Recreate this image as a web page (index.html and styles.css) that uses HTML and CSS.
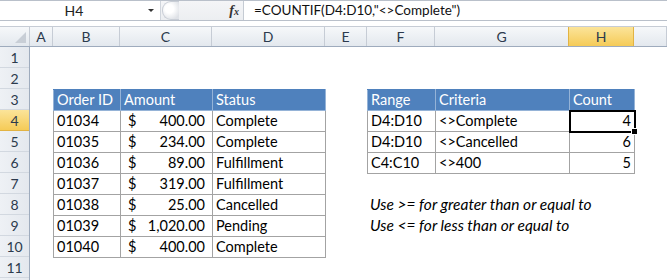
FILE: index.html
```html
<!DOCTYPE html>
<html lang="en">
<head>
    <meta charset="UTF-8">
    <title>COUNTIF not equal to</title>
    <link rel="stylesheet" href="styles.css">
</head>
<body>

    <div class="formula-bar">
        <div class="name-box">
            <span class="cell-ref">H4</span>
            <span class="drop"></span>
        </div>
        <div class="tools">
            <span class="grip"></span>
            <span class="fx">f<small>x</small></span>
        </div>
        <div class="formula">=COUNTIF(D4:D10,"&lt;&gt;Complete")</div>
    </div>

    <div class="sheet">
        <div class="col-heads">
            <div class="corner"><span class="tri"></span></div>
            <div class="ch">A</div>
            <div class="ch">B</div>
            <div class="ch">C</div>
            <div class="ch">D</div>
            <div class="ch">E</div>
            <div class="ch">F</div>
            <div class="ch">G</div>
            <div class="ch active">H</div>
            <div class="ch"></div>
        </div>

        <div class="body">
            <div class="row-heads">
                <div class="rh">1</div>
                <div class="rh">2</div>
                <div class="rh">3</div>
                <div class="rh active">4</div>
                <div class="rh">5</div>
                <div class="rh">6</div>
                <div class="rh">7</div>
                <div class="rh">8</div>
                <div class="rh">9</div>
                <div class="rh">10</div>
                <div class="rh">11</div>
                <div class="rh"></div>
            </div>

            <div class="cells">
                <table class="tbl orders">
                    <colgroup>
                        <col class="w-b"><col class="w-c"><col class="w-d">
                    </colgroup>
                    <tr class="head"><td>Order ID</td><td>Amount</td><td>Status</td></tr>
                    <tr><td>01034</td><td class="money"><span class="cur">$</span>400.00</td><td>Complete</td></tr>
                    <tr><td>01035</td><td class="money"><span class="cur">$</span>234.00</td><td>Complete</td></tr>
                    <tr><td>01036</td><td class="money"><span class="cur">$</span>89.00</td><td>Fulfillment</td></tr>
                    <tr><td>01037</td><td class="money"><span class="cur">$</span>319.00</td><td>Fulfillment</td></tr>
                    <tr><td>01038</td><td class="money"><span class="cur">$</span>25.00</td><td>Cancelled</td></tr>
                    <tr><td>01039</td><td class="money"><span class="cur">$</span>1,020.00</td><td>Pending</td></tr>
                    <tr><td>01040</td><td class="money"><span class="cur">$</span>400.00</td><td>Complete</td></tr>
                </table>

                <table class="tbl counts">
                    <colgroup>
                        <col class="w-f"><col class="w-g"><col class="w-h">
                    </colgroup>
                    <tr class="head"><td>Range</td><td>Criteria</td><td>Count</td></tr>
                    <tr><td>D4:D10</td><td>&lt;&gt;Complete</td><td class="num selected">4</td></tr>
                    <tr><td>D4:D10</td><td>&lt;&gt;Cancelled</td><td class="num">6</td></tr>
                    <tr><td>C4:C10</td><td>&lt;&gt;400</td><td class="num">5</td></tr>
                </table>

                <div class="notes">
                    <p>Use &gt;= for greater than or equal to</p>
                    <p>Use &lt;= for less than or equal to</p>
                </div>
            </div>
        </div>
    </div>

</body>
</html>
```

FILE: styles.css
```css
body {
    margin: 0;
    font-family: 'Lato', 'Liberation Sans', sans-serif;
    font-size: 14.5px;
    color: #000;
    background-color: #fff;
    width: 667px;
    height: 280px;
    overflow: hidden;
}

/* formula bar */

.formula-bar {
    display: flex;
    height: 21px;
    border-top: 1px solid #b9c0ca;
    border-bottom: 1px solid #b9c0ca;
    background-color: #fff;
    box-sizing: border-box;
}

.name-box {
    width: 160px;
    display: flex;
    align-items: center;
    border-right: 1px solid #d0d5dc;
}

.cell-ref {
    flex: 1;
    text-align: center;
    font-size: 14px;
    color: #222;
}

.drop {
    width: 0;
    height: 0;
    border-left: 3px solid transparent;
    border-right: 3px solid transparent;
    border-top: 3px solid #333;
    margin-right: 6px;
}

.tools {
    width: 82px;
    display: flex;
    align-items: center;
    justify-content: space-between;
    background: linear-gradient(#f4f5f7, #eceef1);
    border-right: 1px solid #c5cbd3;
}

.grip {
    width: 16px;
    height: 17px;
    margin-left: 1px;
    border: 1px solid #c9ced6;
    border-right: none;
    border-radius: 9px 0 0 9px;
    background: radial-gradient(circle at 40% 40%, #fff 30%, #dfe2e7 80%);
}

.fx {
    font-family: 'Liberation Serif', serif;
    font-style: italic;
    font-weight: bold;
    font-size: 14px;
    color: #333;
    margin-right: 4px;
}

.fx small {
    font-size: 10px;
}

.formula {
    flex: 1;
    padding-left: 10px;
    line-height: 19px;
    font-size: 13.5px;
    color: #111;
}

/* sheet */

.sheet {
    margin-top: 5px;
    border-top: 1px solid #c6ccd5;
}

.col-heads {
    display: grid;
    grid-template-columns: 30px 23px 67px 92px 113px 42px 68px 134px 65px 1fr;
    height: 19px;
    background: linear-gradient(#f6f8fa, #e3e8ee);
    border-bottom: 1px solid #9eabbd;
}

.corner {
    position: relative;
    border-right: 1px solid #c6ccd5;
}

.tri {
    position: absolute;
    right: 3px;
    bottom: 3px;
    width: 0;
    height: 0;
    border-left: 11px solid transparent;
    border-bottom: 11px solid #c8ced6;
}

.ch {
    text-align: center;
    line-height: 19px;
    font-size: 14px;
    color: #2c3a4d;
    border-right: 1px solid #c6ccd5;
}

.ch.active {
    background: linear-gradient(#fbe49a, #f5cb57);
    border-right: 1px solid #e2b343;
    border-left: 1px solid #e2b343;
    margin-left: -1px;
}

.body {
    display: flex;
}

.row-heads {
    width: 30px;
    flex-shrink: 0;
    background: linear-gradient(to right, #eef1f5, #e4e8ee);
    border-right: 1px solid #9eabbd;
    box-sizing: border-box;
}

.rh {
    height: 21px;
    line-height: 21px;
    text-align: center;
    font-size: 14px;
    color: #2c3a4d;
    border-bottom: 1px solid #d2d8e0;
    box-sizing: border-box;
}

.rh.active {
    background: linear-gradient(#fbe49a, #f5cb57);
    border-bottom: 1px solid #e2b343;
}

.cells {
    flex: 1;
    display: grid;
    grid-template-columns: 23px 67px 92px 113px 42px 68px 134px 65px 1fr;
    grid-template-rows: repeat(12, 21px);
}

/* tables */

.tbl {
    border-collapse: collapse;
    table-layout: fixed;
    width: 100%;
    height: 100%;
}

.orders {
    grid-column: 2 / 5;
    grid-row: 3 / 11;
}

.counts {
    grid-column: 6 / 9;
    grid-row: 3 / 7;
}

.w-b { width: 67px; }
.w-c { width: 92px; }
.w-d { width: 113px; }
.w-f { width: 68px; }
.w-g { width: 134px; }
.w-h { width: 65px; }

.tbl td {
    height: 20px;
    padding: 0 3px;
    border: 1px solid #a3a3a3;
    white-space: nowrap;
    overflow: hidden;
    vertical-align: middle;
    line-height: 20px;
}

.tbl .head td {
    background-color: #4f81bd;
    color: #fff;
    border-color: #95b3d7;
    border-top-color: #4f81bd;
}

.money {
    text-align: right;
}

.tbl td.money {
    padding-right: 7px;
}

.cur {
    float: left;
    padding-left: 4px;
}

.num {
    text-align: right;
}

.tbl td.selected {
    position: relative;
    overflow: visible;
    outline: 2px solid #000;
    outline-offset: -1px;
}

.selected::after {
    content: "";
    position: absolute;
    right: -4px;
    bottom: -4px;
    width: 5px;
    height: 5px;
    background-color: #000;
    border: 1px solid #fff;
}

.notes {
    grid-column: 6 / 9;
    grid-row: 8 / 10;
    padding-left: 3px;
    font-style: italic;
    font-size: 15.5px;
    white-space: nowrap;
}

.notes p {
    margin: 0;
    height: 21px;
    line-height: 21px;
}
```
